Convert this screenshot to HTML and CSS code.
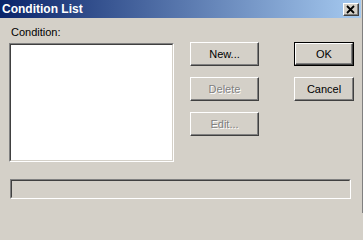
FILE: index.html
```html
<!DOCTYPE html>
<html>
<head>
<meta charset="utf-8">
<link rel="stylesheet" href="styles.css">
</head>
<body>
<div class="window">
  <div class="titlebar">
    <span class="title">Condition List</span>
    <span class="close">
      <svg width="10" height="9" viewBox="0 0 10 9"><path d="M1 1 L8 8 M8 1 L1 8" stroke="#000" stroke-width="1.8" fill="none"/></svg>
    </span>
  </div>
  <div class="client">
    <div class="main">
      <div class="left">
        <div class="label">Condition:</div>
        <div class="sunken list"><div class="inner"></div></div>
      </div>
      <div class="col mid">
        <div class="btn">New...</div>
        <div class="btn disabled">Delete</div>
        <div class="btn disabled">Edit...</div>
      </div>
      <div class="col right">
        <div class="btn default"><div class="face">OK</div></div>
        <div class="btn">Cancel</div>
      </div>
    </div>
    <div class="sunken status"><div class="inner"></div></div>
  </div>
</div>
</body>
</html>
```

FILE: styles.css
```css
html, body {
  margin: 0;
  padding: 0;
  background: #d4d0c8;
}
.window {
  width: 362px;
  height: 213px;
  border-right: 1px solid #808080;
  background: #d4d0c8;
  display: flex;
  flex-direction: column;
  font-family: "Liberation Sans", Arial, sans-serif;
  font-size: 11px;
  color: #000;
  overflow: hidden;
}
.titlebar {
  height: 18px;
  margin-right: 1px;
  background: linear-gradient(to right, #0a246a, #a6caf0);
  display: flex;
  align-items: flex-start;
  justify-content: space-between;
  padding-left: 2px;
}
.title {
  color: #fff;
  font-weight: bold;
  font-size: 12px;
  line-height: 18px;
}
.close {
  box-sizing: border-box;
  width: 16px;
  height: 13px;
  margin-top: 3px;
  margin-right: 2px;
  background: #d4d0c8;
  border-top: 1px solid #fff;
  border-left: 1px solid #fff;
  border-right: 1px solid #404040;
  border-bottom: 1px solid #404040;
  box-shadow: inset -1px -1px 0 #808080;
  display: flex;
  align-items: center;
  justify-content: center;
}
.close svg {
  display: block;
  margin-left: -1px;
  margin-top: -1px;
}
.client {
  display: flex;
  flex-direction: column;
}
.main {
  display: flex;
  align-items: flex-start;
}
.left {
  margin-left: 9px;
  padding-top: 8px;
  width: 165px;
}
.label {
  line-height: 13px;
  padding-left: 2px;
  margin-bottom: 4px;
}
.sunken {
  box-sizing: border-box;
  border-top: 1px solid #808080;
  border-left: 1px solid #808080;
  border-right: 1px solid #fff;
  border-bottom: 1px solid #fff;
}
.sunken .inner {
  box-sizing: border-box;
  height: 100%;
  border-top: 1px solid #404040;
  border-left: 1px solid #404040;
  border-right: 1px solid #d4d0c8;
  border-bottom: 1px solid #d4d0c8;
}
.list {
  width: 165px;
  height: 119px;
}
.list .inner {
  background: #fff;
}
.col {
  display: flex;
  flex-direction: column;
  gap: 11px;
  padding-top: 24px;
}
.mid {
  margin-left: 16px;
  width: 69px;
}
.right {
  margin-left: 35px;
  width: 60px;
}
.btn {
  box-sizing: border-box;
  height: 24px;
  background: #d4d0c8;
  border-top: 1px solid #fff;
  border-left: 1px solid #fff;
  border-right: 1px solid #404040;
  border-bottom: 1px solid #404040;
  box-shadow: inset -1px -1px 0 #808080;
  display: flex;
  align-items: center;
  justify-content: center;
  line-height: 13px;
}
.btn.disabled {
  color: #808080;
  text-shadow: 1px 1px 0 #fff;
}
.btn.default {
  border: 1px solid #000;
  box-shadow: none;
  align-items: stretch;
  justify-content: stretch;
}
.btn.default .face {
  flex: 1;
  box-sizing: border-box;
  border-top: 1px solid #fff;
  border-left: 1px solid #fff;
  border-right: 1px solid #404040;
  border-bottom: 1px solid #404040;
  box-shadow: inset -1px -1px 0 #808080;
  display: flex;
  align-items: center;
  justify-content: center;
}
.status {
  margin-top: 17px;
  margin-left: 10px;
  width: 341px;
  height: 20px;
}
```
